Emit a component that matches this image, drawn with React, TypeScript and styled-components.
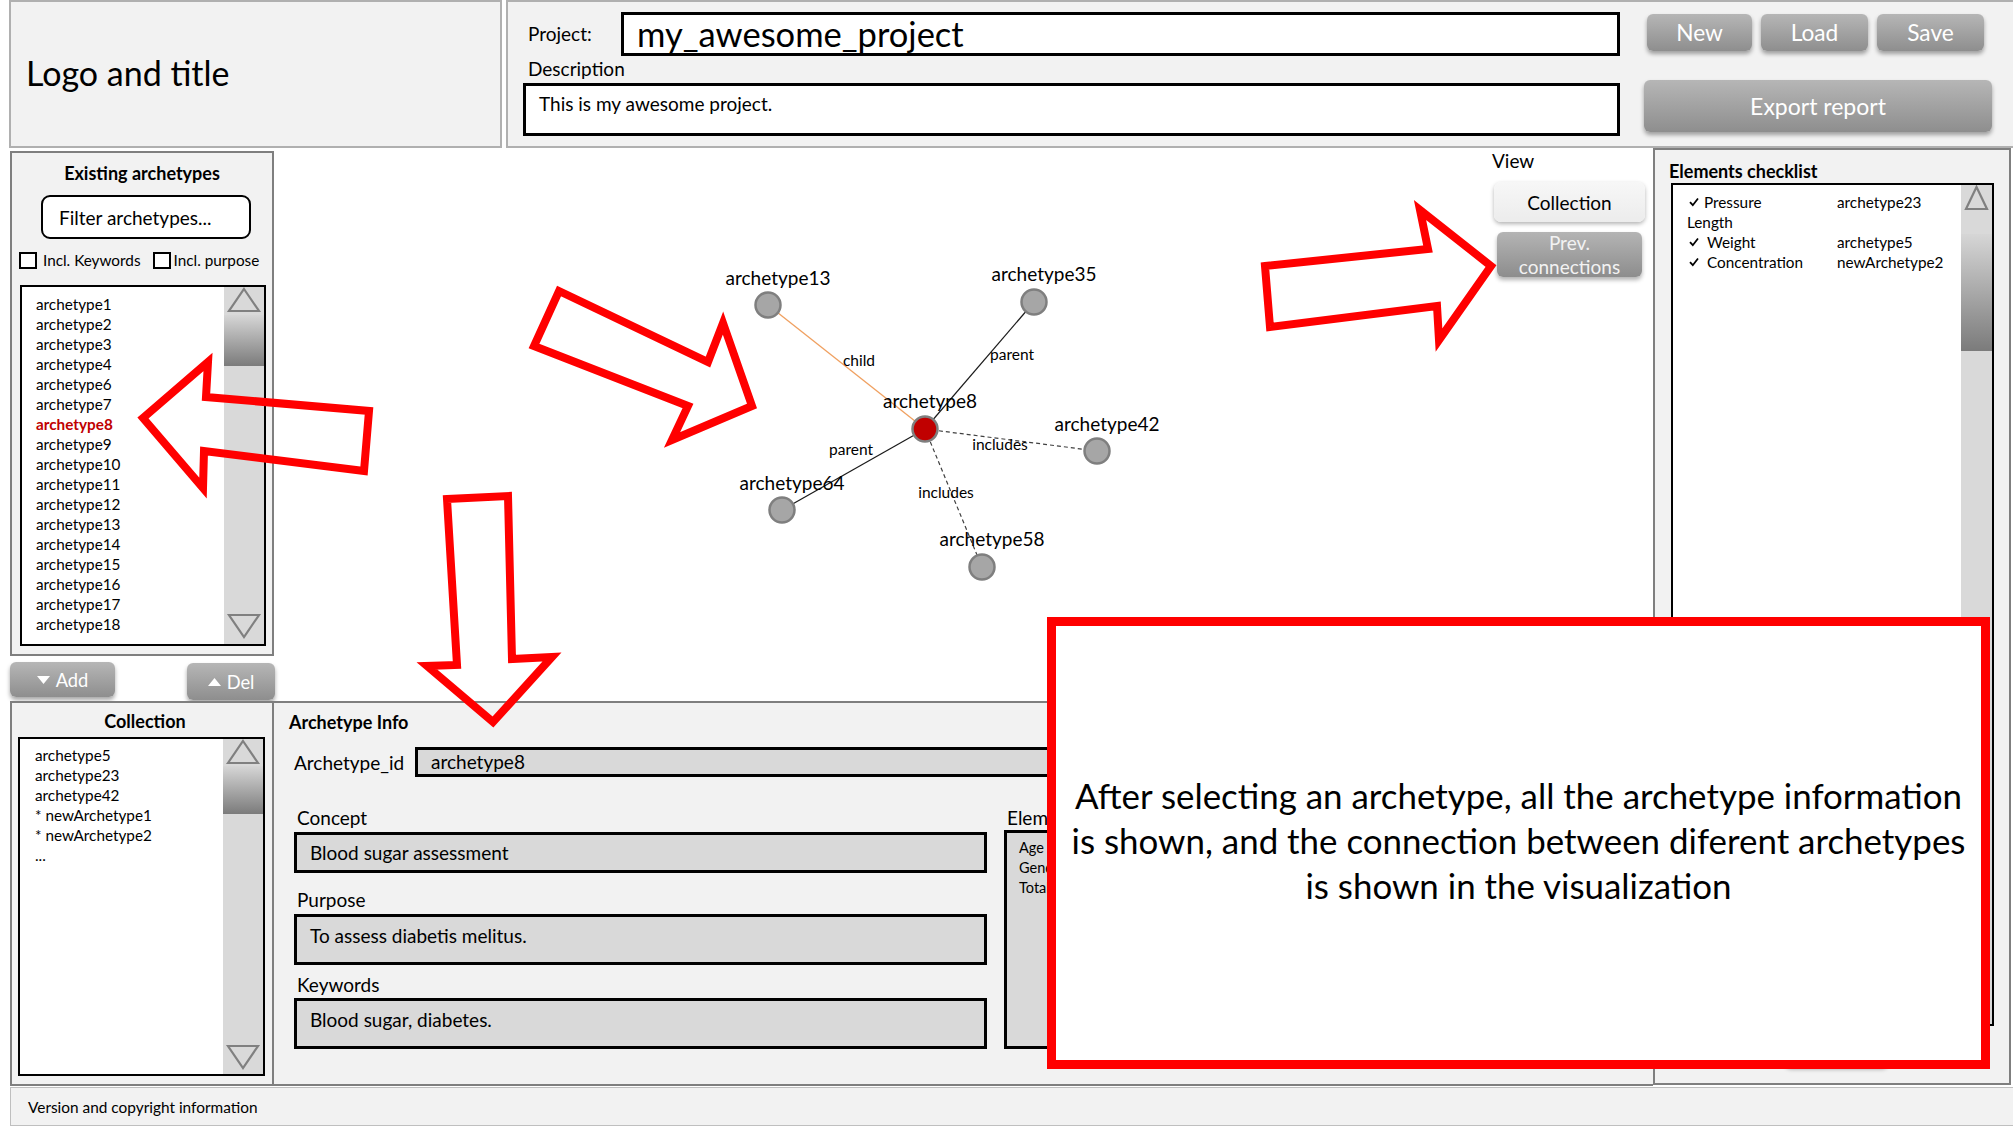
import React from 'react';
import styled, { createGlobalStyle } from 'styled-components';

const FONT = `Lato, "Open Sans", "Liberation Sans", sans-serif`;

const GlobalStyle = createGlobalStyle`
  html, body { margin: 0; padding: 0; background: #ffffff; }
  body { font-family: ${FONT}; color: #000; }
  *, *::before, *::after { box-sizing: border-box; }
`;

const Page = styled.div`
  position: relative;
  width: 2013px;
  height: 1127px;
  overflow: hidden;
  background: #fff;
  display: flex;
  flex-direction: column;
`;

/* ---------- header ---------- */
const Header = styled.header`
  display: flex;
  height: 148px;
  padding-left: 9px;
  gap: 4px;
`;

const LogoPanel = styled.div`
  width: 493px;
  height: 148px;
  background: #f2f2f2;
  border: 2px solid #b0b0b0;
  display: flex;
  align-items: center;
  padding: 0 0 4px 15px;
  font-size: 34px;
`;

const ProjectPanel = styled.div`
  flex: 1;
  height: 148px;
  background: #f2f2f2;
  border: 2px solid #b0b0b0;
  border-right: none;
  display: flex;
  padding: 10px 0 0 15px;
`;

const FormColumn = styled.div`
  width: 1097px;
  display: flex;
  flex-direction: column;
`;

const ProjectRow = styled.div`
  display: flex;
  height: 44px;
`;

const FieldLabel = styled.div<{ $w?: number }>`
  width: ${(p) => (p.$w ? `${p.$w}px` : 'auto')};
  padding-left: 5px;
  font-size: 19px;
  line-height: 22px;
  display: flex;
  align-items: center;
`;

const ProjectInput = styled.div`
  flex: 1;
  border: 3px solid #000;
  background: #fff;
  font-size: 34.5px;
  line-height: 38px;
  padding-left: 13px;
  display: flex;
  align-items: center;
`;

const DescLabel = styled.div`
  margin-top: 2px;
  padding-left: 5px;
  font-size: 19px;
  line-height: 22px;
`;

const DescBox = styled.div`
  margin-top: 3px;
  height: 53px;
  border: 3px solid #000;
  background: #fff;
  padding: 7px 0 0 13px;
  font-size: 19px;
  line-height: 22px;
`;

const ButtonsColumn = styled.div`
  margin-left: 24px;
  width: 349px;
  display: flex;
  flex-direction: column;
`;

const ButtonRow = styled.div`
  display: flex;
  margin-top: 2px;
  padding-left: 3px;
  gap: 9px;
`;

const GrayButton = styled.div<{ $w: number; $h: number; $size?: number }>`
  width: ${(p) => p.$w}px;
  height: ${(p) => p.$h}px;
  border-radius: 6px;
  background: linear-gradient(#b6b6b6, #8e8e8e);
  box-shadow: 0 3px 4px rgba(0, 0, 0, 0.35);
  color: #fff;
  font-size: ${(p) => p.$size ?? 22.7}px;
  display: flex;
  align-items: center;
  justify-content: center;
  gap: 6px;
`;

const ExportWrap = styled.div`
  margin-top: 29px;
`;

/* ---------- body ---------- */
const Body = styled.div`
  display: grid;
  grid-template-columns: 264px 1379px 358px;
  grid-template-rows: 553px 385px;
  padding-left: 10px;
`;

const LeftTop = styled.div`
  display: flex;
  flex-direction: column;
`;

const Panel = styled.section`
  background: #f2f2f2;
  border: 2px solid #7f7f7f;
  display: flex;
  flex-direction: column;
`;

const ExistingPanel = styled(Panel)`
  margin-top: 3px;
  height: 505px;
`;

const PanelTitle = styled.h2<{ $center?: boolean; $mt: number }>`
  margin: ${(p) => p.$mt}px 0 0 0;
  font-size: 18px;
  font-weight: 700;
  line-height: 22px;
  text-align: ${(p) => (p.$center ? 'center' : 'left')};
`;

const FilterInput = styled.div`
  margin: 11px 0 0 29px;
  width: 210px;
  height: 44px;
  border: 2px solid #000;
  border-radius: 9px;
  background: #fff;
  font-size: 19px;
  display: flex;
  align-items: center;
  padding-left: 16px;
`;

const CheckRow = styled.div`
  margin-top: 13px;
  padding-left: 7px;
  display: flex;
  align-items: center;
  height: 16px;
  font-size: 15.3px;
`;

const CheckBox = styled.span<{ $gap: number }>`
  width: 18px;
  height: 17px;
  border: 2px solid #000;
  background: #fff;
  margin-right: ${(p) => p.$gap}px;
  flex: none;
`;

const CheckLabel = styled.span<{ $mr?: number }>`
  margin-right: ${(p) => p.$mr ?? 0}px;
  white-space: nowrap;
`;

const ListBox = styled.div<{ $w: number; $h: number; $mt: number; $ml: number }>`
  margin: ${(p) => p.$mt}px 0 0 ${(p) => p.$ml}px;
  width: ${(p) => p.$w}px;
  height: ${(p) => p.$h}px;
  border: 2px solid #000;
  background: #fff;
  display: flex;
  flex: none;
`;

const ListItems = styled.ul<{ $pt: number; $pl: number }>`
  flex: 1;
  margin: 0;
  padding: ${(p) => p.$pt}px 0 0 ${(p) => p.$pl}px;
  list-style: none;
  font-size: 15.3px;
  line-height: 20px;
`;

const ListItem = styled.li<{ $selected?: boolean }>`
  color: ${(p) => (p.$selected ? '#c00000' : '#000')};
  font-weight: ${(p) => (p.$selected ? 700 : 400)};
  white-space: nowrap;
`;

const ScrollTrack = styled.div<{ $w: number }>`
  width: ${(p) => p.$w}px;
  background: #d9d9d9;
  display: flex;
  flex-direction: column;
  align-items: center;
  flex: none;
`;

const Thumb = styled.div<{ $mt: number; $h: number }>`
  align-self: stretch;
  margin-top: ${(p) => p.$mt}px;
  height: ${(p) => p.$h}px;
  background: linear-gradient(#d6d6d6, #7b7b7b);
`;

const ScrollSpacer = styled.div`
  flex: 1;
`;

const ArrowSvg = styled.svg<{ $mb?: number }>`
  display: block;
  flex: none;
  margin-bottom: ${(p) => p.$mb ?? 0}px;
`;

const AddDelRow = styled.div`
  height: 45px;
  display: flex;
  justify-content: space-between;
  align-items: flex-start;
  padding-top: 6px;
`;

const DelWrap = styled.div`
  margin-top: 1px;
  margin-right: -1px;
`;

const CollectionPanel = styled(Panel)`
  height: 385px;
  padding-left: 6px;
`;

const VizPanel = styled.div`
  display: grid;
  grid-template-columns: 1216px 1fr;
`;

const GraphSvg = styled.svg`
  display: block;
`;

const ViewColumn = styled.div`
  display: flex;
  flex-direction: column;
  padding-top: 2px;
`;

const ViewLabel = styled.div`
  margin-left: 2px;
  font-size: 19px;
  line-height: 22px;
`;

const LightButton = styled.div`
  margin: 10px 0 0 4px;
  width: 151px;
  height: 40px;
  border-radius: 7px;
  background: linear-gradient(#f7f7f7, #ececec);
  box-shadow: 0 2px 4px rgba(0, 0, 0, 0.3);
  font-size: 19px;
  display: flex;
  align-items: center;
  justify-content: center;
`;

const PrevButton = styled.div`
  margin: 10px 0 0 7px;
  width: 145px;
  height: 45px;
  border-radius: 6px;
  background: linear-gradient(#b4b4b4, #8d8d8d);
  box-shadow: 0 3px 4px rgba(0, 0, 0, 0.3);
  color: #f2f2f2;
  font-size: 19px;
  line-height: 24px;
  text-align: center;
  display: flex;
  flex-direction: column;
  justify-content: center;
`;

const ChecklistPanel = styled(Panel)`
  grid-row: 1 / span 2;
  grid-column: 3;
  height: 937px;
  padding-left: 14px;
`;

const CheckGrid = styled.div`
  flex: 1;
  display: grid;
  grid-template-columns: 150px 1fr;
  grid-auto-rows: 20px;
  align-content: start;
  padding: 7px 0 0 14px;
  font-size: 15.3px;
  line-height: 20px;
`;

const CheckCell = styled.div<{ $indent: number }>`
  display: flex;
  align-items: center;
  white-space: nowrap;
  gap: ${(p) => p.$indent}px;
  padding-left: 2px;
`;

const PlainCell = styled.div`
  white-space: nowrap;
`;

const HiddenButtonWrap = styled.div`
  margin: 4px 0 0 116px;
`;

const InfoPanel = styled.section`
  background: #f2f2f2;
  border-top: 2px solid #7f7f7f;
  border-bottom: 2px solid #7f7f7f;
  height: 385px;
  padding-left: 15px;
  display: flex;
  flex-direction: column;
`;

const IdRow = styled.div`
  margin-top: 14px;
  display: flex;
  height: 30px;
`;

const IdLabel = styled.div`
  width: 126px;
  padding-left: 5px;
  font-size: 19px;
  display: flex;
  align-items: center;
`;

const GrayField = styled.div<{ $h: number; $center?: boolean; $flex?: boolean }>`
  ${(p) => (p.$flex ? 'flex: 1;' : '')}
  height: ${(p) => p.$h}px;
  border: 3px solid #000;
  background: #d9d9d9;
  font-size: 19px;
  line-height: 22px;
  padding: ${(p) => (p.$center ? '0' : '8px')} 0 0 13px;
  display: flex;
  align-items: ${(p) => (p.$center ? 'center' : 'flex-start')};
`;

const IdField = styled(GrayField)`
  margin-right: 20px;
`;

const InfoGrid = styled.div`
  margin-top: 30px;
  display: grid;
  grid-template-columns: 693px 1fr;
  column-gap: 17px;
  padding-left: 5px;
  padding-right: 20px;
`;

const InfoColumn = styled.div`
  display: flex;
  flex-direction: column;
`;

const InfoLabel = styled.div<{ $mt: number }>`
  margin-top: ${(p) => p.$mt}px;
  padding-left: 3px;
  font-size: 19px;
  line-height: 22px;
`;

const FieldWrap = styled.div<{ $mt: number }>`
  margin-top: ${(p) => p.$mt}px;
`;

const ElementsBox = styled.div`
  margin-top: 1px;
  height: 219px;
  border: 3px solid #000;
  background: #d9d9d9;
  padding: 5px 0 0 12px;
  font-size: 14.5px;
  line-height: 20px;
`;

const Footer = styled.footer`
  margin: 1px 0 0 10px;
  height: 39px;
  background: #f2f2f2;
  border: 1px solid #bfbfbf;
  border-right: none;
  display: flex;
  align-items: center;
  padding-left: 17px;
  font-size: 15.4px;
`;

/* ---------- annotations ---------- */
const AnnotationLayer = styled.svg`
  position: absolute;
  left: 0;
  top: 0;
  pointer-events: none;
  z-index: 5;
`;

const NoteBox = styled.div`
  position: absolute;
  left: 1047px;
  top: 617px;
  width: 943px;
  height: 452px;
  border: 9px solid #ff0000;
  background: #fff;
  z-index: 6;
  padding-top: 147px;
  text-align: center;
  font-size: 34.9px;
  line-height: 45px;
  white-space: nowrap;
`;

/* ---------- pieces ---------- */
const UpArrow = ({ w }: { w: number }) => (
  <ArrowSvg width={w} height={26} viewBox={`0 0 ${w} 26`}>
    <polygon points={`${w / 2},2 ${w - 5},24 5,24`} fill="none" stroke="#808080" strokeWidth={2.2} />
  </ArrowSvg>
);

const DownArrow = ({ w, mb }: { w: number; mb: number }) => (
  <ArrowSvg width={w} height={26} viewBox={`0 0 ${w} 26`} $mb={mb}>
    <polygon points={`5,2 ${w - 5},2 ${w / 2},24`} fill="none" stroke="#808080" strokeWidth={2.2} />
  </ArrowSvg>
);

const Scrollbar = ({
  w,
  thumbTop,
  thumbH,
  down,
  downMb = 4,
}: {
  w: number;
  thumbTop: number;
  thumbH: number;
  down: boolean;
  downMb?: number;
}) => (
  <ScrollTrack $w={w}>
    <UpArrow w={w} />
    <Thumb $mt={thumbTop} $h={thumbH} />
    <ScrollSpacer />
    {down && <DownArrow w={w} mb={downMb} />}
  </ScrollTrack>
);

const Tri = ({ up }: { up: boolean }) => (
  <svg width={13} height={8} viewBox="0 0 13 8">
    <polygon points={up ? '6.5,0 13,8 0,8' : '0,0 13,0 6.5,8'} fill="#fff" />
  </svg>
);

const Tick = () => (
  <svg width={10} height={10} viewBox="0 0 10 10">
    <path d="M1 5.2 L3.8 8.2 L9 1.5" fill="none" stroke="#000" strokeWidth={1.8} />
  </svg>
);

const existing = [
  'archetype1', 'archetype2', 'archetype3', 'archetype4', 'archetype6', 'archetype7',
  'archetype8', 'archetype9', 'archetype10', 'archetype11', 'archetype12', 'archetype13',
  'archetype14', 'archetype15', 'archetype16', 'archetype17', 'archetype18',
];

const collection = ['archetype5', 'archetype23', 'archetype42', '* newArchetype1', '* newArchetype2', '...'];

type Node = { id: string; x: number; y: number; lx: number; ly: number; main?: boolean };
const nodes: Node[] = [
  { id: 'archetype13', x: 494, y: 157, lx: 504, ly: 129 },
  { id: 'archetype35', x: 760, y: 154, lx: 770, ly: 125 },
  { id: 'archetype42', x: 823, y: 303, lx: 833, ly: 275 },
  { id: 'archetype64', x: 508, y: 362, lx: 518, ly: 334 },
  { id: 'archetype58', x: 708, y: 419, lx: 718, ly: 390 },
  { id: 'archetype8', x: 651, y: 281, lx: 656, ly: 252, main: true },
];

type Edge = { to: string; label: string; lx: number; ly: number; kind: 'child' | 'parent' | 'includes' };
const edges: Edge[] = [
  { to: 'archetype13', label: 'child', lx: 585, ly: 212, kind: 'child' },
  { to: 'archetype35', label: 'parent', lx: 738, ly: 206, kind: 'parent' },
  { to: 'archetype42', label: 'includes', lx: 726, ly: 296, kind: 'includes' },
  { to: 'archetype64', label: 'parent', lx: 577, ly: 301, kind: 'parent' },
  { to: 'archetype58', label: 'includes', lx: 672, ly: 344, kind: 'includes' },
];

const edgeStroke = { child: '#f0a060', parent: '#1a1a1a', includes: '#404040' };

const Graph = () => {
  const center = nodes.find((n) => n.main)!;
  return (
    <GraphSvg width={1216} height={553} viewBox="0 0 1216 553">
      {edges.map((e) => {
        const n = nodes.find((m) => m.id === e.to)!;
        return (
          <line
            key={e.to}
            x1={center.x}
            y1={center.y}
            x2={n.x}
            y2={n.y}
            stroke={edgeStroke[e.kind]}
            strokeWidth={e.kind === 'child' ? 1.3 : 1.2}
            strokeDasharray={e.kind === 'includes' ? '4 3' : undefined}
          />
        );
      })}
      {nodes.map((n) => (
        <circle
          key={n.id}
          cx={n.x}
          cy={n.y}
          r={12.5}
          fill={n.main ? '#c00000' : '#a6a6a6'}
          stroke="#7f7f7f"
          strokeWidth={2.5}
        />
      ))}
      {nodes.map((n) => (
        <text
          key={`l-${n.id}`}
          x={n.lx}
          y={n.ly}
          textAnchor="middle"
          dominantBaseline="central"
          fontFamily={FONT}
          fontSize={19}
          fill="#000"
        >
          {n.id}
        </text>
      ))}
      {edges.map((e) => (
        <text
          key={`e-${e.to}`}
          x={e.lx}
          y={e.ly}
          textAnchor="middle"
          dominantBaseline="central"
          fontFamily={FONT}
          fontSize={15.5}
          fill="#000"
        >
          {e.label}
        </text>
      ))}
    </GraphSvg>
  );
};

const arrowPolys = [
  '143,418 208,362 206,397 369,411 364,471 204,451 203,488',
  '559,291 708,362 723,323 752,406 672,440 688,406 534,346',
  '447,499 508,496 512,659 552,657 493,722 427,666 457,665',
  '1265,266 1428,249 1420,210 1491,266 1439,340 1437,306 1270,327',
];

export default function App() {
  return (
    <>
      <GlobalStyle />
      <Page>
        <Header>
          <LogoPanel>Logo and title</LogoPanel>
          <ProjectPanel>
            <FormColumn>
              <ProjectRow>
                <FieldLabel $w={98}>Project:</FieldLabel>
                <ProjectInput>my_awesome_project</ProjectInput>
              </ProjectRow>
              <DescLabel>Description</DescLabel>
              <DescBox>This is my awesome project.</DescBox>
            </FormColumn>
            <ButtonsColumn>
              <ButtonRow>
                <GrayButton $w={105} $h={37}>New</GrayButton>
                <GrayButton $w={107} $h={37}>Load</GrayButton>
                <GrayButton $w={107} $h={37}>Save</GrayButton>
              </ButtonRow>
              <ExportWrap>
                <GrayButton $w={348} $h={52} $size={23}>Export report</GrayButton>
              </ExportWrap>
            </ButtonsColumn>
          </ProjectPanel>
        </Header>

        <Body>
          <LeftTop>
            <ExistingPanel>
              <PanelTitle $center $mt={9}>Existing archetypes</PanelTitle>
              <FilterInput>Filter archetypes...</FilterInput>
              <CheckRow>
                <CheckBox $gap={6} />
                <CheckLabel $mr={12}>Incl. Keywords</CheckLabel>
                <CheckBox $gap={3} />
                <CheckLabel>Incl. purpose</CheckLabel>
              </CheckRow>
              <ListBox $w={246} $h={361} $mt={17} $ml={8}>
                <ListItems $pt={7} $pl={14}>
                  {existing.map((a) => (
                    <ListItem key={a} $selected={a === 'archetype8'}>
                      {a}
                    </ListItem>
                  ))}
                </ListItems>
                <Scrollbar w={40} thumbTop={2} thumbH={51} down downMb={5} />
              </ListBox>
            </ExistingPanel>
            <AddDelRow>
              <GrayButton $w={105} $h={35} $size={18.3}>
                <Tri up={false} />
                Add
              </GrayButton>
              <DelWrap>
                <GrayButton $w={88} $h={37} $size={18.3}>
                  <Tri up />
                  Del
                </GrayButton>
              </DelWrap>
            </AddDelRow>
          </LeftTop>

          <VizPanel>
            <Graph />
            <ViewColumn>
              <ViewLabel>View</ViewLabel>
              <LightButton>Collection</LightButton>
              <PrevButton>
                <span>Prev.</span>
                <span>connections</span>
              </PrevButton>
            </ViewColumn>
          </VizPanel>

          <ChecklistPanel>
            <PanelTitle $mt={10}>Elements checklist</PanelTitle>
            <ListBox $w={323} $h={843} $mt={1} $ml={2}>
              <CheckGrid>
                <CheckCell $indent={5}>
                  <Tick />
                  Pressure
                </CheckCell>
                <PlainCell>archetype23</PlainCell>
                <PlainCell>Length</PlainCell>
                <PlainCell />
                <CheckCell $indent={8}>
                  <Tick />
                  Weight
                </CheckCell>
                <PlainCell>archetype5</PlainCell>
                <CheckCell $indent={8}>
                  <Tick />
                  Concentration
                </CheckCell>
                <PlainCell>newArchetype2</PlainCell>
              </CheckGrid>
              <Scrollbar w={31} thumbTop={23} thumbH={117} down={false} />
            </ListBox>
            <HiddenButtonWrap>
              <GrayButton $w={103} $h={36} $size={19}>Add</GrayButton>
            </HiddenButtonWrap>
          </ChecklistPanel>

          <CollectionPanel>
            <PanelTitle $center $mt={7}>Collection</PanelTitle>
            <ListBox $w={247} $h={339} $mt={5} $ml={0}>
              <ListItems $pt={6} $pl={15}>
                {collection.map((a) => (
                  <ListItem key={a}>{a}</ListItem>
                ))}
              </ListItems>
              <Scrollbar w={40} thumbTop={1} thumbH={48} down downMb={4} />
            </ListBox>
          </CollectionPanel>

          <InfoPanel>
            <PanelTitle $mt={8}>Archetype Info</PanelTitle>
            <IdRow>
              <IdLabel>Archetype_id</IdLabel>
              <IdField $h={30} $center $flex>
                archetype8
              </IdField>
            </IdRow>
            <InfoGrid>
              <InfoColumn>
                <InfoLabel $mt={0}>Concept</InfoLabel>
                <FieldWrap $mt={3}>
                  <GrayField $h={41} $center>
                    Blood sugar assessment
                  </GrayField>
                </FieldWrap>
                <InfoLabel $mt={16}>Purpose</InfoLabel>
                <FieldWrap $mt={3}>
                  <GrayField $h={51}>To assess diabetis melitus.</GrayField>
                </FieldWrap>
                <InfoLabel $mt={9}>Keywords</InfoLabel>
                <FieldWrap $mt={2}>
                  <GrayField $h={51}>Blood sugar, diabetes.</GrayField>
                </FieldWrap>
              </InfoColumn>
              <InfoColumn>
                <InfoLabel $mt={0}>Elements</InfoLabel>
                <ElementsBox>
                  <div>Age</div>
                  <div>Gender</div>
                  <div>Total</div>
                </ElementsBox>
              </InfoColumn>
            </InfoGrid>
          </InfoPanel>
        </Body>

        <Footer>Version and copyright information</Footer>

        <AnnotationLayer width={2013} height={1127} viewBox="0 0 2013 1127">
          {arrowPolys.map((p) => (
            <polygon key={p} points={p} fill="none" stroke="#ff0000" strokeWidth={8} strokeLinejoin="miter" />
          ))}
        </AnnotationLayer>

        <NoteBox>
          After selecting an archetype, all the archetype information
          <br />
          is shown, and the connection between diferent archetypes
          <br />
          is shown in the visualization
        </NoteBox>
      </Page>
    </>
  );
}
